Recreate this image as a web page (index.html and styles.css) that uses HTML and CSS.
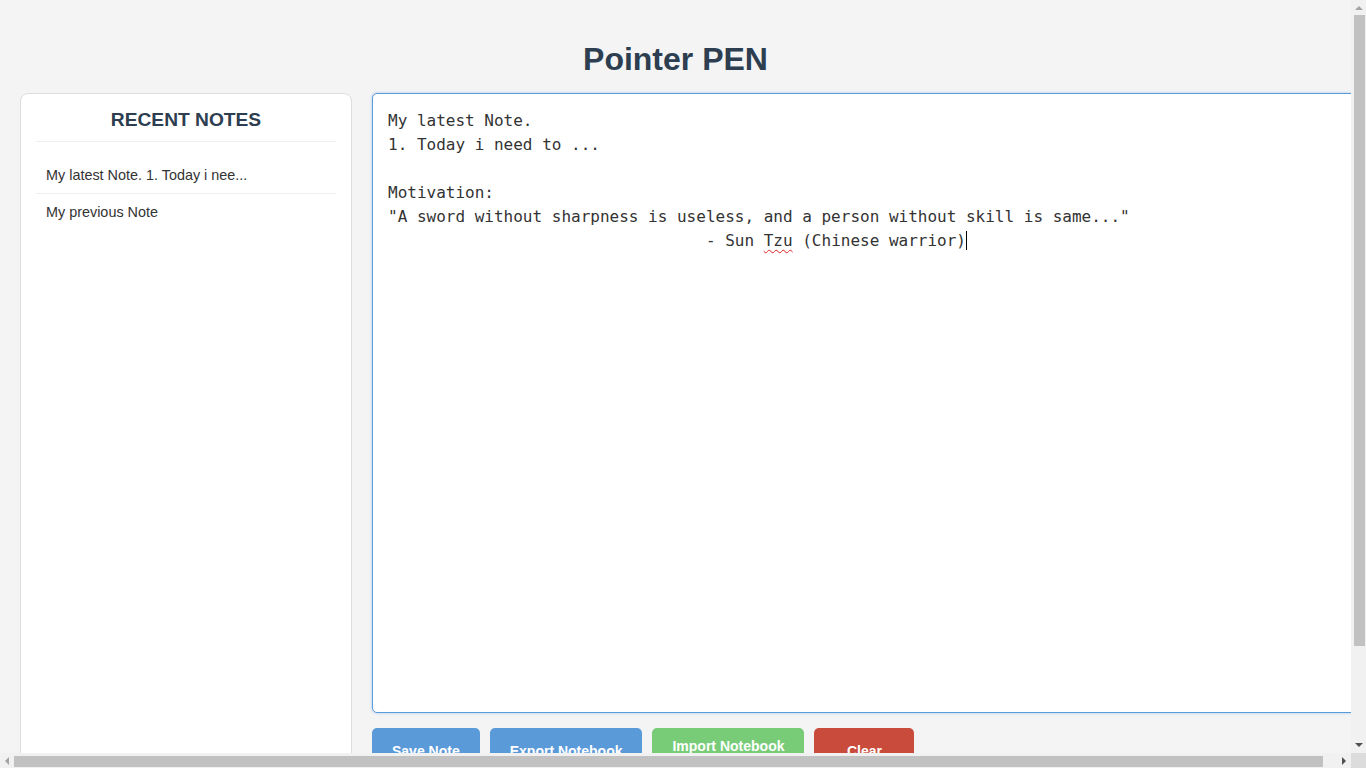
FILE: index.html
```html
<!DOCTYPE html>
<html lang="en">
<head>
<meta charset="utf-8">
<title>Pointer PEN</title>
<link rel="stylesheet" href="styles.css">
</head>
<body>
<div class="page">
  <h1 class="title">Pointer PEN</h1>
  <div class="layout">
    <aside class="sidebar">
      <h2 class="sidebar-title">RECENT NOTES</h2>
      <ul class="note-list">
        <li class="note-item">My latest Note. 1. Today i nee...</li>
        <li class="note-item">My previous Note</li>
      </ul>
    </aside>
    <main class="main">
      <div class="editor is-focused" role="textbox" aria-multiline="true">My latest Note.
1. Today i need to ...

Motivation:
"A sword without sharpness is useless, and a person without skill is same..."
                                 - Sun <span class="misspelled">Tzu</span> (Chinese warrior)<span class="caret"></span></div>
      <div class="actions">
        <button class="btn btn-blue" type="button">Save Note</button>
        <button class="btn btn-blue" type="button">Export Notebook</button>
        <label class="btn-label btn-green">Import Notebook</label>
        <button class="btn btn-red btn-wide" type="button">Clear</button>
      </div>
    </main>
  </div>
</div>

<div class="scrollbar scrollbar-v" aria-hidden="true">
  <span class="arrow arrow-up"></span>
  <span class="thumb thumb-v"></span>
  <span class="arrow arrow-down"></span>
</div>
<div class="scrollbar scrollbar-h" aria-hidden="true">
  <span class="arrow arrow-left"></span>
  <span class="thumb thumb-h"></span>
  <span class="arrow arrow-right"></span>
</div>
<div class="scroll-corner" aria-hidden="true"></div>
</body>
</html>
```
FILE: styles.css
```css
html, body {
  margin: 0;
  overflow: hidden;
  height: 100%;
}
body {
  background: #f4f4f4;
  font-family: "Liberation Sans", Arial, sans-serif;
  color: #333;
}
.page {
  width: 1351px;
  height: 753px;
  box-sizing: border-box;
  padding: 20px;
  overflow: hidden;
}
.title {
  margin: 21px 0 15px;
  text-align: center;
  color: #2c3e50;
  font-size: 32px;
  line-height: 37px;
  font-weight: bold;
}
.layout {
  display: flex;
  gap: 20px;
  align-items: flex-start;
}
.sidebar {
  box-sizing: border-box;
  flex: 0 0 332px;
  height: 755px;
  padding: 15px;
  background: #fff;
  border: 1px solid #ddd;
  border-radius: 8px;
}
.sidebar-title {
  margin: 0 0 15px;
  padding-bottom: 10px;
  border-bottom: 1px solid #eee;
  text-align: center;
  color: #2c3e50;
  font-size: 19.2px;
  line-height: 22px;
  font-weight: bold;
}
.note-list {
  list-style: none;
  margin: 0;
  padding: 0;
}
.note-item {
  padding: 10px;
  font-size: 14.4px;
  line-height: 16px;
  color: #333;
  border-bottom: 1px solid #eee;
}
.note-item:last-child {
  border-bottom: none;
}
.main {
  flex: 1 1 auto;
  min-width: 0;
}
.editor {
  width: 100%;
  height: 588px;
  padding: 15px;
  background: #fff;
  border: 1px solid #ccc;
  border-radius: 5px;
  font-family: "DejaVu Sans Mono", monospace;
  font-size: 16px;
  line-height: 24px;
  color: #333;
  white-space: pre-wrap;
}
.editor.is-focused {
  border-color: #5b9bd9;
  box-shadow: 0 0 3px rgba(74, 144, 226, 0.45);
}
.misspelled {
  text-decoration: underline wavy #e02020;
  text-decoration-thickness: 1px;
  text-decoration-skip-ink: none;
  text-underline-offset: 3px;
}
.caret {
  display: inline-block;
  width: 1px;
  height: 19px;
  background: #000;
  vertical-align: -4px;
}
.actions {
  display: flex;
  gap: 10px;
  margin-top: 15px;
  height: 46px;
}
.btn, .btn-label {
  box-sizing: border-box;
  border: none;
  border-radius: 5px;
  color: #fff;
  font-family: "Liberation Sans", Arial, sans-serif;
  font-size: 14px;
  font-weight: bold;
  line-height: 16px;
  cursor: pointer;
}
.btn {
  display: flex;
  align-items: center;
  justify-content: center;
  padding: 0 20px;
  height: 46px;
}
.btn-label {
  display: block;
  padding: 10px 20px;
}
.btn-wide {
  min-width: 100px;
}
.btn-blue {
  background: #5b9ad8;
}
.btn-green {
  background: #78cc78;
}
.btn-red {
  background: #c94b3c;
}

/* imitation of the browser's classic scrollbars */
.scrollbar {
  position: fixed;
  background: #f1f1f1;
  display: flex;
  align-items: center;
}
.scrollbar-v {
  top: 0;
  right: 0;
  width: 15px;
  height: 753px;
  flex-direction: column;
}
.scrollbar-h {
  left: 0;
  bottom: 0;
  width: 1351px;
  height: 15px;
}
.scroll-corner {
  position: fixed;
  right: 0;
  bottom: 0;
  width: 15px;
  height: 15px;
  background: #dcdcdc;
}
.thumb {
  display: block;
  background: #c1c1c1;
}
.thumb-v {
  width: 11px;
  height: 631px;
  margin-left: 1px;
}
.thumb-h {
  height: 11px;
  width: 1309px;
  margin-top: 1px;
}
.arrow {
  display: block;
  width: 0;
  height: 0;
  flex: none;
}
.arrow-up {
  margin: 6px 0 5px;
  border-left: 4px solid transparent;
  border-right: 4px solid transparent;
  border-bottom: 4px solid #a3a3a3;
}
.arrow-down {
  margin-top: auto;
  margin-bottom: 6px;
  border-left: 4px solid transparent;
  border-right: 4px solid transparent;
  border-top: 4px solid #505050;
}
.arrow-left {
  margin: 0 5px 0 5px;
  border-top: 4px solid transparent;
  border-bottom: 4px solid transparent;
  border-right: 4px solid #a3a3a3;
}
.arrow-right {
  margin-left: auto;
  margin-right: 5px;
  border-top: 4px solid transparent;
  border-bottom: 4px solid transparent;
  border-left: 4px solid #505050;
}
```
